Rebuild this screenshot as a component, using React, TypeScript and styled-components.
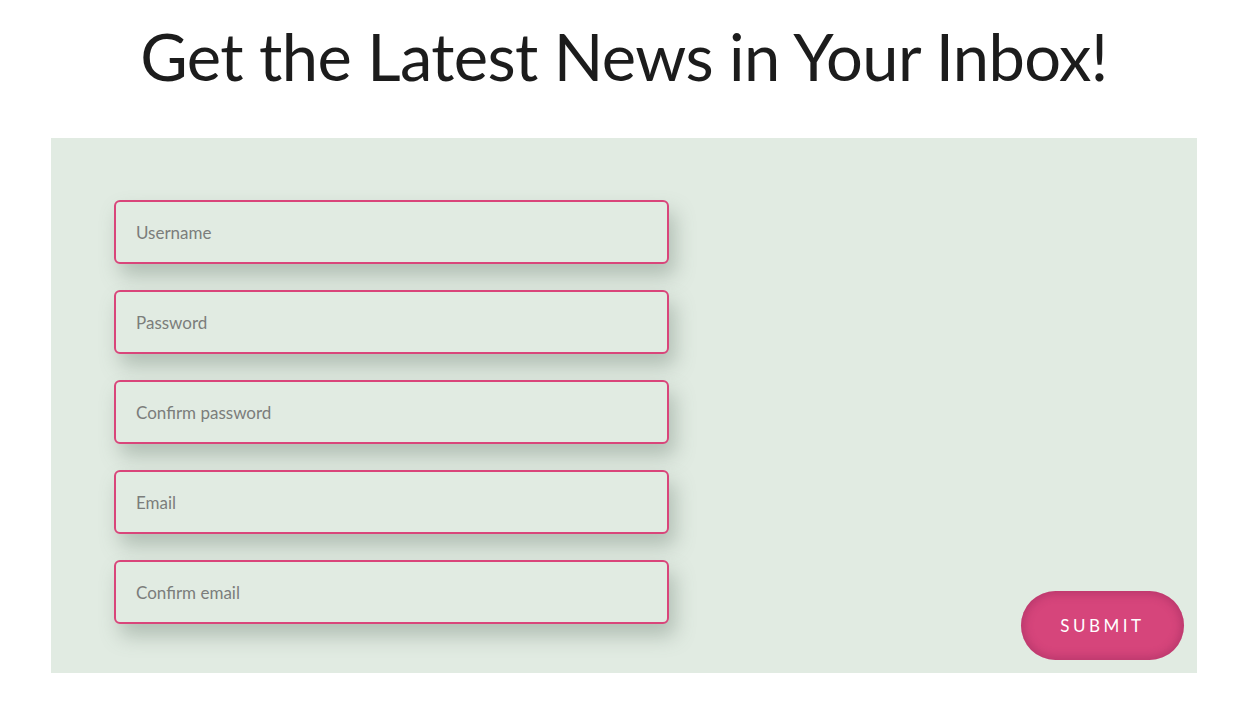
import React from "react";
import styled, { createGlobalStyle } from "styled-components";

const Global = createGlobalStyle`
  html, body { margin: 0; padding: 0; background: #ffffff; }
  body { font-family: "Lato", "Open Sans", sans-serif; }
  * { box-sizing: border-box; }
`;

const Page = styled.div`
  width: 1248px;
  padding: 0 51px;
  display: flex;
  flex-direction: column;
`;

const Title = styled.h1`
  margin: 0;
  height: 138px;
  padding-top: 18px;
  text-align: center;
  font-family: "Lato", sans-serif;
  font-weight: 400;
  font-size: 65px;
  line-height: 76px;
  color: #1c1c1c;
  letter-spacing: -0.6px;
`;

const Panel = styled.form`
  background: #e1ebe2;
  height: 535px;
  padding: 62px 13px 13px 63px;
  display: flex;
  justify-content: space-between;
  align-items: flex-end;
`;

const Fields = styled.div`
  display: flex;
  flex-direction: column;
  gap: 26px;
  width: 555px;
  align-self: flex-start;
`;

const Field = styled.input`
  height: 64px;
  width: 100%;
  border: 2px solid #d9457a;
  border-radius: 6px;
  background: #e1ebe2;
  padding: 0 20px;
  font-family: "Lato", sans-serif;
  font-size: 17px;
  color: #333;
  outline: none;
  box-shadow: 6px 12px 20px rgba(90, 110, 95, 0.35);
  &::placeholder { color: #7b7d7b; }
`;

const Submit = styled.button`
  width: 163px;
  height: 69px;
  border: none;
  border-radius: 35px;
  background: #d6457b;
  box-shadow: inset 0 0 8px 3px rgba(150, 40, 90, 0.45);
  color: #ffffff;
  font-family: "Lato", sans-serif;
  font-size: 17px;
  letter-spacing: 3.5px;
  padding-left: 6px;
  cursor: pointer;
`;

const fields = [
  { placeholder: "Username", type: "text" },
  { placeholder: "Password", type: "password" },
  { placeholder: "Confirm password", type: "password" },
  { placeholder: "Email", type: "email" },
  { placeholder: "Confirm email", type: "email" },
];

export default function App() {
  return (
    <>
      <Global />
      <Page>
        <Title>Get the Latest News in Your Inbox!</Title>
        <Panel onSubmit={(e) => e.preventDefault()}>
          <Fields>
            {fields.map((f) => (
              <Field key={f.placeholder} type={f.type} placeholder={f.placeholder} />
            ))}
          </Fields>
          <Submit type="submit">SUBMIT</Submit>
        </Panel>
      </Page>
    </>
  );
}
